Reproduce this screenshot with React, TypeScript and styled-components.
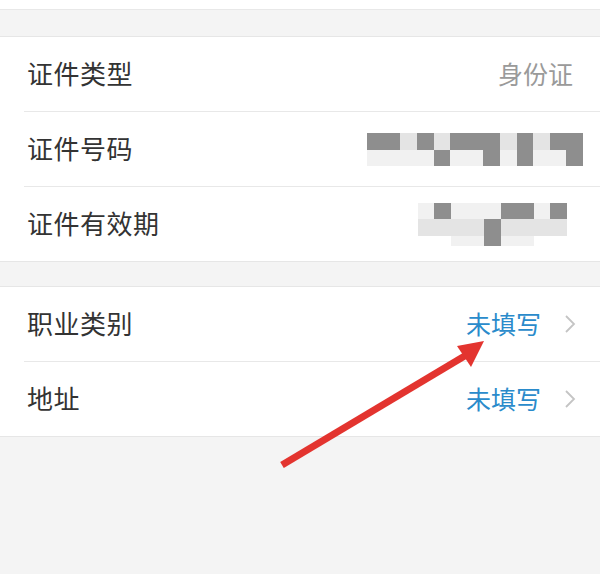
import React from "react";
import styled, { createGlobalStyle } from "styled-components";

const Global = createGlobalStyle`
  html, body { margin: 0; padding: 0; background: #f4f4f4; }
  body { font-family: "Noto Sans CJK SC", "Noto Sans", sans-serif; }
`;

const Page = styled.div`
  position: relative;
  width: 600px;
  height: 574px;
  background: #f4f4f4;
  overflow: hidden;
`;

const TopStrip = styled.div`
  height: 9px;
  background: #fff;
  border-bottom: 1px solid #e8e8e8;
`;

const Group = styled.div<{ $gap: number }>`
  margin-top: ${(p) => p.$gap}px;
  background: #fff;
  border-top: 1px solid #e6e6e6;
  border-bottom: 1px solid #e6e6e6;
`;

const Row = styled.div<{ $last?: boolean }>`
  height: 74px;
  margin-left: 24px;
  padding-right: 24px;
  display: flex;
  align-items: center;
  justify-content: space-between;
  border-bottom: ${(p) => (p.$last ? "none" : "1px solid #e8e8e8")};
`;

const Label = styled.span`
  padding-left: 3px;
  padding-bottom: 3px;
  font-size: 26px;
  color: #333;
  letter-spacing: 0.5px;
`;

const Value = styled.span<{ $blue?: boolean }>`
  padding-bottom: 3px;
  font-size: 25px;
  color: ${(p) => (p.$blue ? "#2a8bcb" : "#9a9a9a")};
  margin-right: ${(p) => (p.$blue ? "0" : "3px")};
`;

const Right = styled.div`
  display: flex;
  align-items: center;
  gap: 23px;
`;

const Mosaic = styled.div<{ $mr: number }>`
  display: grid;
  margin-right: ${(p) => p.$mr}px;
  filter: blur(0.7px);
`;

const Cell = styled.div<{ $c: string }>`
  background: ${(p) => p.$c};
`;

const Overlay = styled.svg`
  position: absolute;
  left: 0;
  top: 0;
  pointer-events: none;
`;

const D = "#8e8e8e";
const L = "#e4e4e4";
const W = "#f1f1f1";
const N = "transparent";

const idGrid = [
  [D, D, L, D, L, D, D, D, L, D, L, D, D],
  [W, W, W, W, D, W, W, D, W, D, W, W, D],
];
const dateGrid = [
  [W, D, W, W, W, D, D, W, D],
  [L, L, L, L, D, L, L, L, L],
  [N, N, W, W, D, W, W, N, N],
];

function Pixelated({
  grid,
  rows,
  mr,
}: {
  grid: string[][];
  rows: number[];
  mr: number;
}) {
  return (
    <Mosaic
      $mr={mr}
      style={{
        gridTemplateColumns: `repeat(${grid[0].length}, 16.6px)`,
        gridTemplateRows: rows.map((r) => `${r}px`).join(" "),
      }}
    >
      {grid.flatMap((row, i) =>
        row.map((c, j) => <Cell key={`${i}-${j}`} $c={c} />)
      )}
    </Mosaic>
  );
}

const Chevron = () => (
  <svg width="12" height="20" viewBox="0 0 12 20">
    <path d="M2 2 L10 10 L2 18" fill="none" stroke="#c4c4c4" strokeWidth="1.8" />
  </svg>
);

export default function App() {
  return (
    <Page>
      <Global />
      <TopStrip />
      <Group $gap={26}>
        <Row>
          <Label>证件类型</Label>
          <Value>身份证</Value>
        </Row>
        <Row>
          <Label>证件号码</Label>
          <Pixelated grid={idGrid} rows={[17, 16]} mr={-7} />
        </Row>
        <Row $last>
          <Label>证件有效期</Label>
          <Pixelated grid={dateGrid} rows={[16, 17, 10]} mr={9} />
        </Row>
      </Group>
      <Group $gap={24}>
        <Row>
          <Label>职业类别</Label>
          <Right>
            <Value $blue>未填写</Value>
            <Chevron />
          </Right>
        </Row>
        <Row $last>
          <Label>地址</Label>
          <Right>
            <Value $blue>未填写</Value>
            <Chevron />
          </Right>
        </Row>
      </Group>
      <Overlay width="600" height="574" viewBox="0 0 600 574">
        <line x1="282" y1="465" x2="468" y2="354" stroke="#e3342f" strokeWidth="7" />
        <polygon points="484,341 457,346 471,367" fill="#e3342f" />
      </Overlay>
    </Page>
  );
}
